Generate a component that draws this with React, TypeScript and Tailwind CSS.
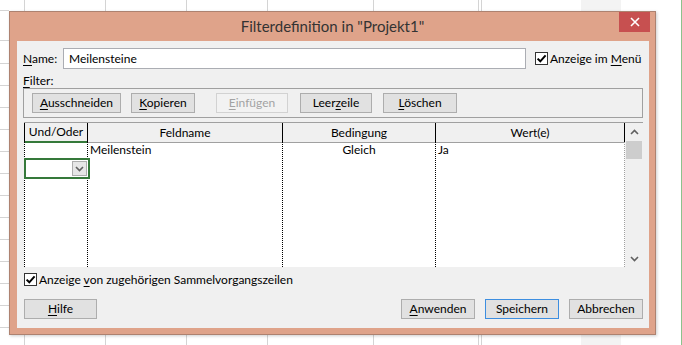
import type { ReactNode } from 'react';

const font = "font-['Lato','Noto_Sans','Liberation_Sans',sans-serif]";

function U({ children }: { children: ReactNode }) {
  return <span className="underline underline-offset-[2px] decoration-1">{children}</span>;
}

function Btn({
  children,
  className = '',
  disabled = false,
  primary = false,
}: {
  children: ReactNode;
  className?: string;
  disabled?: boolean;
  primary?: boolean;
}) {
  const border = primary ? 'border-[#3d8ee0]' : disabled ? 'border-[#d2d2d2]' : 'border-[#adadad]';
  const look = disabled ? 'bg-[#f2f2f2] text-[#a3a3a3]' : 'bg-[#e1e1e1] text-black';
  return (
    <div className={`flex h-[20px] shrink-0 items-center justify-center whitespace-nowrap border ${border} ${look} ${className}`}>
      {children}
    </div>
  );
}

function Check() {
  return (
    <span className="flex h-[13px] w-[13px] shrink-0 items-center justify-center border border-[#333333] bg-white">
      <svg width="11" height="11" viewBox="0 0 11 11">
        <path d="M1.6 5.6 L4.3 8.3 L9.6 2.3" stroke="#000" strokeWidth="2" fill="none" />
      </svg>
    </span>
  );
}

function Chevron({ up = false }: { up?: boolean }) {
  return (
    <svg width="9" height="6" viewBox="0 0 9 6">
      <path
        d={up ? 'M1 5 L4.5 1.5 L8 5' : 'M1 1 L4.5 4.5 L8 1'}
        stroke="#606060"
        strokeWidth="1.6"
        fill="none"
      />
    </svg>
  );
}

export default function App() {
  return (
    <div className={`relative h-[345px] w-[682px] overflow-hidden bg-white text-[12px] ${font}`}>
      {/* spreadsheet behind the dialog */}
      <div className="absolute inset-0 flex">
        <div className="h-full w-[25px] border-r border-[#d4d4d4]" />
        <div className="h-full w-[81px] border-r border-[#d4d4d4]" />
        <div className="h-full w-[81px] border-r border-[#d4d4d4]" />
        <div className="h-full w-[81px] border-r border-[#d4d4d4]" />
        <div className="h-full w-[106px] border-r border-[#d4d4d4]" />
        <div className="h-full w-[105px] border-r border-[#d4d4d4]" />
        <div className="h-full w-[3px] border-r border-[#d4d4d4]" />
        <div className="h-full w-[99px]" />
        <div className="h-full w-[40px] bg-[#f3f3f3]" />
        <div className="h-full w-[60px]" />
        <div className="h-full w-[1px] bg-[#8cc28c]" />
      </div>
      <div className="absolute left-0 top-0 flex w-[9px] flex-col">
        <div className="h-[11px] border-b border-[#d4d4d4]" />
        <div className="h-[30px] border-b border-[#d4d4d4]" />
        <div className="h-[23px] border-b border-[#d4d4d4]" />
        {Array.from({ length: 13 }).map((_, i) => (
          <div key={i} className="h-[22px] border-b border-[#d4d4d4]" />
        ))}
      </div>

      {/* dialog window */}
      <div className="absolute left-[9px] top-[11px] flex h-[324px] w-[647px] flex-col border border-[#ad8270] bg-[#dfa38a] shadow-[1px_1px_3px_rgba(0,0,0,0.2)]">
        <div className="relative flex h-[29px] shrink-0 items-center justify-center pb-[1px] text-[15px] text-[#333333]">
          Filterdefinition in "Projekt1"
          <div className="absolute right-[5px] top-0 flex h-[20px] w-[31px] items-center justify-center bg-[#c75050]">
            <svg width="10" height="10" viewBox="0 0 10 10">
              <path d="M1 1 L9 9 M9 1 L1 9" stroke="#fff" strokeWidth="1.6" />
            </svg>
          </div>
        </div>

        <div className="mb-[6px] ml-[7px] mr-[6px] flex flex-1 flex-col bg-[#f0f0f0] px-[6px] text-black">
          {/* name row */}
          <div className="mt-[7px] flex h-[21px] items-center whitespace-nowrap">
            <span className="w-[40px]">
              <U>N</U>ame:
            </span>
            <div className="flex h-[21px] w-[463px] items-center border border-[#abadb3] bg-white pl-[5px]">
              Meilensteine
            </div>
            <div className="ml-[9px] flex items-center gap-[2px]">
              <Check />
              <span>
                Anzeige im <U>M</U>enü
              </span>
            </div>
          </div>

          <div className="mt-[4px] h-[15px] leading-[15px]">
            <U>F</U>ilter:
          </div>

          {/* toolbar group */}
          <div className="flex h-[30px] items-start border border-[#a0a0a0] pl-[8px] pt-[4px]">
            <Btn className="w-[89px]">
              <span>
                <U>A</U>usschneiden
              </span>
            </Btn>
            <Btn className="ml-[10px] w-[64px]">
              <span>
                <U>K</U>opieren
              </span>
            </Btn>
            <Btn className="ml-[21px] w-[72px]" disabled>
              <span>
                <U>E</U>infügen
              </span>
            </Btn>
            <Btn className="ml-[12px] w-[72px]">
              <span>
                Leer<U>z</U>eile
              </span>
            </Btn>
            <Btn className="ml-[11px] w-[74px]">
              <span>
                <U>L</U>öschen
              </span>
            </Btn>
          </div>

          {/* criteria table */}
          <div className="ml-[1px] mt-[4px] flex h-[145px] w-[619px] border-t border-[#a0a0a0] bg-white">
            <div className="flex w-[601px] flex-col">
              <div className="grid h-[19px] grid-cols-[63px_195px_153px_190px] bg-[#f0f0f0]">
                <div className="flex items-center justify-center border-b-2 border-l border-b-[#35793a] border-l-black">
                  Und/Oder
                </div>
                <div className="flex items-center justify-center border-b border-l border-b-[#a0a0a0] border-l-black">
                  Feldname
                </div>
                <div className="flex items-center justify-center border-b border-l border-b-[#a0a0a0] border-l-black">
                  Bedingung
                </div>
                <div className="flex items-center justify-center border-x border-b border-b-[#a0a0a0] border-x-black">
                  Wert(e)
                </div>
              </div>
              <div className="grid flex-1 grid-cols-[63px_195px_153px_190px]">
                <div className="relative z-10 flex flex-col border-l border-dotted border-black">
                  <div className="h-[16px]" />
                  <div className="-ml-[1px] flex h-[21px] w-[66px] items-center justify-end border-2 border-[#35793a] bg-white pr-[1px]">
                    <div className="flex h-[15px] w-[15px] items-center justify-center border border-[#adadad] bg-[#e6e6e6]">
                      <Chevron />
                    </div>
                  </div>
                </div>
                <div className="border-l border-dotted border-black pl-[2px] leading-[16px]">Meilenstein</div>
                <div className="border-l border-dotted border-black text-center leading-[16px]">Gleich</div>
                <div className="border-l border-r border-dotted border-black border-r-[#a0a0a0] border-r-solid pl-[2px] leading-[16px]">
                  Ja
                </div>
              </div>
            </div>
            {/* scrollbar */}
            <div className="flex w-[18px] flex-col bg-[#f0f0f0]">
              <div className="flex h-[18px] items-center justify-center">
                <Chevron up />
              </div>
              <div className="mx-[1px] h-[18px] bg-[#cdcdcd]" />
              <div className="flex-1" />
              <div className="flex h-[17px] items-center justify-center">
                <Chevron />
              </div>
            </div>
          </div>

          {/* summary checkbox */}
          <div className="mt-[6px] flex h-[13px] items-center gap-[2px] whitespace-nowrap pl-[1px]">
            <Check />
            <span>
              Anzeige <U>v</U>on zugehörigen Sammelvorgangszeilen
            </span>
          </div>

          {/* footer buttons */}
          <div className="mt-[13px] flex pl-[1px]">
            <Btn className="w-[73px]">
              <span>
                <U>H</U>ilfe
              </span>
            </Btn>
            <div className="flex-1" />
            <Btn className="w-[74px]">
              <span>
                <U>A</U>nwenden
              </span>
            </Btn>
            <Btn className="ml-[10px] w-[74px]" primary>
              Speichern
            </Btn>
            <Btn className="ml-[10px] w-[74px]">Abbrechen</Btn>
          </div>
        </div>
      </div>
    </div>
  );
}
